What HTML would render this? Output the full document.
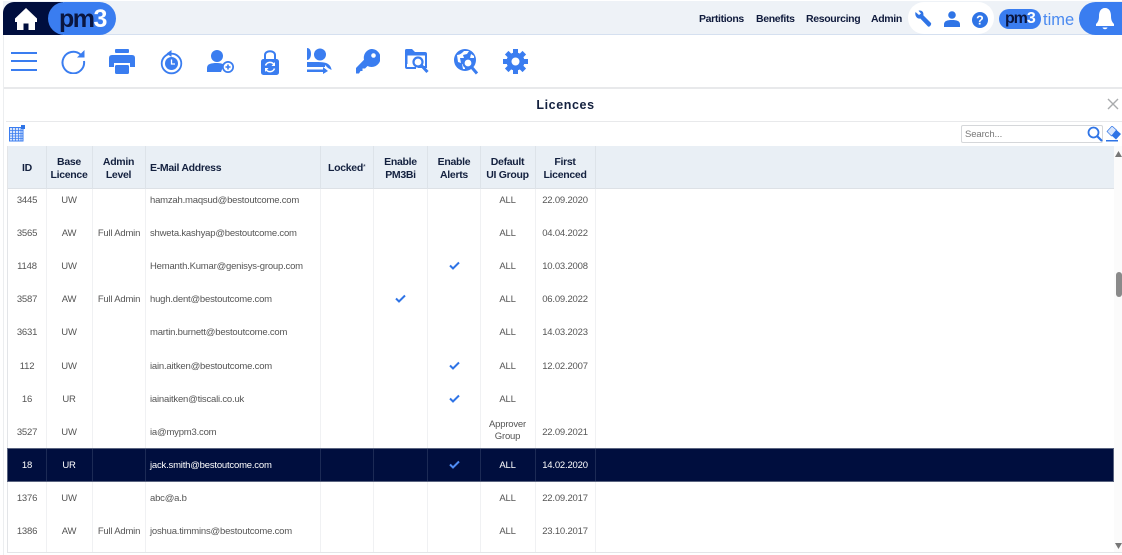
<!DOCTYPE html>
<html><head><meta charset="utf-8"><style>
*{box-sizing:border-box}
html,body{margin:0;padding:0;width:1122px;height:555px;overflow:hidden;background:#fff;font-family:"Liberation Sans",sans-serif}
.a{position:absolute}
.t{position:absolute;white-space:nowrap;line-height:12px}
.c{transform:translateX(-50%);text-align:center}
.nav{font-size:10.5px;font-weight:bold;color:#0f1a3c;top:12.5px;letter-spacing:-.35px}
.h{font-size:10.5px;font-weight:bold;color:#14213f;letter-spacing:-.3px;margin-top:1px}
.d{font-size:9.5px;color:#555;letter-spacing:-.2px;margin-top:2px}
.s{color:#fff}
.v{position:absolute;top:146px;width:1px;height:406px;background:#f0f1f3}
.hv{position:absolute;top:146px;width:1px;height:43px;background:#dde3e9}
.sv{position:absolute;top:449px;width:1px;height:32px;background:#1c2a55}
</style></head><body>
<div class="a" style="left:3px;top:1px;width:1119px;height:34px;background:#eef2f7;border-bottom:1px solid #d5e0f0"></div>
<div class="a" style="left:3px;top:2px;width:60px;height:33px;background:#000e3e;border-radius:11px 0 0 0"></div>
<div class="a" style="left:48px;top:2px;width:68px;height:33px;background:#3a7df0;border-radius:17px"></div>
<svg class="a" style="left:14px;top:7px" width="24" height="24" viewBox="0 0 24 24"><path d="M12 1 L23 11.5 V15 H21 V23 H14.5 V16.5 H9.5 V23 H3 V15 H1 V11.5Z" fill="#fff"/></svg>
<div class="t" style="left:59px;top:5px;font-size:25px;line-height:28px;font-weight:bold;letter-spacing:-1.5px;color:#0a1640">pm<span style="color:#fff">3</span></div>

<div class="t nav" style="left:699px">Partitions</div>
<div class="t nav" style="left:756px">Benefits</div>
<div class="t nav" style="left:806px">Resourcing</div>
<div class="t nav" style="left:871px">Admin</div>
<div class="a" style="left:908px;top:2px;width:86px;height:32px;background:#fff;border-radius:16px"></div>
<svg class="a" style="left:914px;top:10px" width="18" height="18" viewBox="0 0 18 18"><path d="M1.5 2 L5 5 L7 3.5 L4.5 .8 C7.5 -.2 10 2 9.3 5.2 L17 13 C17.8 14.5 15.5 17.5 14 16.5 L6.3 8.5 C3.2 9.3 .5 6 1.5 2Z" fill="#2f74e6"/></svg>
<svg class="a" style="left:944px;top:11px" width="16" height="16" viewBox="0 0 16 16"><circle cx="8" cy="4" r="3.8" fill="#2f74e6"/><path d="M0 16 V13.5 C0 10 3 9 8 9 S16 10 16 13.5 V16Z" fill="#2f74e6"/></svg>
<svg class="a" style="left:972px;top:12px" width="16" height="16" viewBox="0 0 16 16"><circle cx="8" cy="8" r="8" fill="#2f74e6"/><text x="8" y="12.5" font-family="Liberation Sans" font-size="12.5" font-weight="bold" fill="#fff" text-anchor="middle">?</text></svg>
<div class="a" style="left:999px;top:9px;width:42px;height:20px;background:#3a7df0;border-radius:10px"></div>
<div class="t" style="left:1005px;top:10px;font-size:16px;line-height:18px;font-weight:bold;letter-spacing:-1.1px;color:#0a1640">pm<span style="color:#fff">3</span></div>
<div class="t" style="left:1043px;top:10px;font-size:16.5px;line-height:20px;color:#4a8af0">time</div>
<div class="a" style="left:1079px;top:2px;width:60px;height:33px;background:#3a7df0;border-radius:17px"></div>
<svg class="a" style="left:1095px;top:7px" width="20" height="24" viewBox="0 0 20 24"><path d="M10 1 C14.5 1 16 5 16 9 C16 13 17 15 19 17 V19 H1 V17 C3 15 4 13 4 9 C4 5 5.5 1 10 1Z" fill="#fff"/><path d="M7.5 20.5 H12.5 C12 22.8 8 22.8 7.5 20.5Z" fill="#fff"/></svg>

<div class="a" style="left:11px;top:52px;width:26px;height:2px;background:#3a7df0"></div>
<div class="a" style="left:11px;top:60px;width:26px;height:2px;background:#3a7df0"></div>
<div class="a" style="left:11px;top:69px;width:26px;height:2px;background:#3a7df0"></div>
<svg class="a" style="left:60px;top:48px" width="26" height="26" viewBox="0 0 26 26"><path d="M20.5 6.5 A10.8 10.8 0 1 0 24 13" fill="none" stroke="#3a7df0" stroke-width="2"/><path d="M24.5 2 V9.5 H17Z" fill="#3a7df0"/></svg>
<svg class="a" style="left:109px;top:49px" width="26" height="25" viewBox="0 0 26 25"><rect x="6" y="0" width="14" height="4" rx="1" fill="#3a7df0"/><path d="M3 6 H23 Q26 6 26 9 V18 H21 V14 H5 V18 H0 V9 Q0 6 3 6Z" fill="#3a7df0"/><rect x="6" y="16" width="14" height="9" rx="1.5" fill="#3a7df0"/></svg>
<svg class="a" style="left:160px;top:49px" width="23" height="26" viewBox="0 0 23 26"><circle cx="11.5" cy="14.5" r="9.8" fill="none" stroke="#3a7df0" stroke-width="1.8"/><circle cx="11.5" cy="14.5" r="6.5" fill="#3a7df0"/><path d="M11.5 10.5 V15 H15" fill="none" stroke="#fff" stroke-width="1.3"/><path d="M11.5 1 V8 L6.5 4.5Z" fill="#3a7df0"/></svg>
<svg class="a" style="left:207px;top:50px" width="27" height="23" viewBox="0 0 27 23"><circle cx="10" cy="6" r="6" fill="#3a7df0"/><path d="M0 22 V18 C0 14 4 13 10 13 C13 13 15 13.5 17 14.5 L14 22Z" fill="#3a7df0"/><circle cx="21" cy="17" r="6" fill="#3a7df0"/><circle cx="21" cy="17" r="4.3" fill="#fff"/><path d="M21 14.5 V19.5 M18.5 17 H23.5" stroke="#3a7df0" stroke-width="1.6"/></svg>
<svg class="a" style="left:260px;top:49px" width="20" height="26" viewBox="0 0 20 26"><path d="M5 10 V6 C5 1 15 1 15 6 V10" fill="none" stroke="#3a7df0" stroke-width="2"/><rect x="1" y="10" width="18" height="16" rx="2.5" fill="#3a7df0"/><path d="M5.5 16.5 A4.8 4.8 0 0 1 14 15.5 M14.5 19.5 A4.8 4.8 0 0 1 6 20.5" fill="none" stroke="#fff" stroke-width="1.5"/><path d="M15 13 V17 H11.5Z M5 23 V19 H8.5Z" fill="#fff"/></svg>
<svg class="a" style="left:307px;top:48px" width="25" height="26" viewBox="0 0 25 26"><path d="M0 0 C3 0 4 3 4 6 S2.5 12 0 12Z" fill="#3a7df0"/><circle cx="13" cy="6.5" r="6" fill="#3a7df0"/><path d="M0 14 H8 C12 14 19 14 21 16 C24 18 24.5 21 24.5 22 L21 20 L18 17 V19 H0Z" fill="#3a7df0"/><path d="M0 21.5 H16 V19 L21 23 L16 26 V24 H0Z" fill="#3a7df0"/></svg>
<svg class="a" style="left:356px;top:49px" width="24" height="25" viewBox="0 0 24 25"><path d="M15 0 A9 9 0 1 1 11.5 17 L9 19.5 H6.5 V22 H4.5 L3 24.5 H0 V19 L8 10.8 A9 9 0 0 1 15 0Z" fill="#3a7df0"/><circle cx="17.5" cy="6.5" r="2.3" fill="#fff"/></svg>
<svg class="a" style="left:405px;top:49px" width="24" height="25" viewBox="0 0 24 25"><path d="M0 1.5 Q0 0 1.5 0 H7 L10 3 H20 Q22 3 22 5 V19 H13 L10 15 H2 V6 H0Z" fill="#3a7df0"/><rect x="2.5" y="6.5" width="17.5" height="10.5" fill="#fff"/><path d="M0 4 H2 V18 H11 V20 H2 Q0 20 0 18Z" fill="#3a7df0"/><circle cx="13" cy="13" r="4.5" fill="#fff" stroke="#3a7df0" stroke-width="2.2"/><path d="M16 16 L22.5 23" stroke="#3a7df0" stroke-width="3"/></svg>
<svg class="a" style="left:454px;top:49px" width="25" height="26" viewBox="0 0 25 26"><circle cx="11" cy="11" r="11" fill="#3a7df0"/><path d="M3 6 C6 6 8 4 10 2 L15 2 L13 5 L9 6 L10 9 L6 9 L7 14 L4 13Z M8 15 L11 15 L11 20 L9 20Z M17 5 L20 7 L20 9 L16 9Z" fill="#fff"/><circle cx="14" cy="14" r="4.5" fill="#fff" stroke="#3a7df0" stroke-width="2.2"/><path d="M17 17.5 L23 24.5" stroke="#3a7df0" stroke-width="3"/></svg>
<svg class="a" style="left:503px;top:49px" width="25" height="25" viewBox="0 0 25 25"><circle cx="12.5" cy="12.5" r="6.5" fill="none" stroke="#3a7df0" stroke-width="5"/><g stroke="#3a7df0" stroke-width="5"><path d="M12.5 0 V5 M12.5 20 V25 M0 12.5 H5 M20 12.5 H25 M3.7 3.7 L7.2 7.2 M17.8 17.8 L21.3 21.3 M3.7 21.3 L7.2 17.8 M17.8 7.2 L21.3 3.7"/></g></svg>

<div class="a" style="left:3px;top:87px;width:1119px;height:2px;background:#e8e9eb"></div>
<div class="a" style="left:3px;top:35px;width:1px;height:520px;background:#eceef0"></div>
<div class="t" style="left:565.5px;top:98px;font-size:12.5px;line-height:14px;font-weight:bold;color:#14213f;letter-spacing:.6px;transform:translateX(-50%)">Licences</div>
<svg class="a" style="left:1107px;top:98px" width="12" height="12" viewBox="0 0 12 12"><path d="M1 1 L11 11 M11 1 L1 11" stroke="#a9abad" stroke-width="1.4"/></svg>
<div class="a" style="left:6px;top:121px;width:1116px;height:1px;background:#e8e9eb"></div>
<svg class="a" style="left:9px;top:125px" width="16" height="17" viewBox="0 0 16 17"><rect x=".5" y="2.5" width="13.5" height="13.5" fill="#d9e6fb" stroke="#3a7df0"/><path d="M3.5 3 V16 M6.5 3 V16 M9.5 3 V16 M12 3 V16 M1 5.5 H14 M1 8.5 H14 M1 11 H14 M1 13.5 H14" stroke="#3a7df0" stroke-width=".8"/><rect x="12" y="0" width="4" height="4" fill="#2f74e6"/></svg>
<div class="a" style="left:961px;top:125px;width:142px;height:18px;border:1px solid #d5d7da;border-radius:2px;background:#fff"></div>
<div class="t" style="left:965px;top:129px;font-size:9.5px;letter-spacing:-.1px;color:#777">Search...</div>
<svg class="a" style="left:1087px;top:126px" width="16" height="16" viewBox="0 0 16 16"><circle cx="6.5" cy="6.5" r="5" fill="none" stroke="#2f74e6" stroke-width="1.8"/><path d="M10 10 L15 15" stroke="#2f74e6" stroke-width="2.2"/></svg>
<svg class="a" style="left:1106px;top:126px" width="15" height="16" viewBox="0 0 15 16"><path d="M6 0 L15 8 L10 13.500 L5 9Z" fill="#2f74e6"/><path d="M6 0 L1 5.500 L5.500 10 L10.500 4Z" fill="#d7e5fc" stroke="#2f74e6" stroke-width=".7"/><rect x="0" y="14" width="12" height="1.5" fill="#2f74e6"/></svg>

<div class="a" style="left:7px;top:146px;width:1107px;height:43px;background:#e9eff5;border-bottom:1px solid #dde1e6"></div>
<div class="a" style="left:7px;top:552px;width:1115px;height:1px;background:#e3e5e8"></div>
<div class="a" style="left:7px;top:146px;width:1px;height:406px;background:#e3e5e8"></div>
<div class="v" style="left:46px"></div><div class="v" style="left:92px"></div><div class="v" style="left:145px"></div><div class="v" style="left:320px"></div><div class="v" style="left:373px"></div><div class="v" style="left:427px"></div><div class="v" style="left:480px"></div><div class="v" style="left:535px"></div><div class="v" style="left:595px"></div>
<div class="hv" style="left:46px"></div><div class="hv" style="left:92px"></div><div class="hv" style="left:145px"></div><div class="hv" style="left:320px"></div><div class="hv" style="left:373px"></div><div class="hv" style="left:427px"></div><div class="hv" style="left:480px"></div><div class="hv" style="left:535px"></div><div class="hv" style="left:595px"></div>
<div class="a" style="left:7px;top:448px;width:1107px;height:34px;background:#000e3e;border:1px solid #5a6480"></div>
<div class="sv" style="left:46px"></div><div class="sv" style="left:92px"></div><div class="sv" style="left:145px"></div><div class="sv" style="left:320px"></div><div class="sv" style="left:373px"></div><div class="sv" style="left:427px"></div><div class="sv" style="left:480px"></div><div class="sv" style="left:535px"></div><div class="sv" style="left:595px"></div>

<div class="t h c" style="left:27px;top:161px">ID</div>
<div class="t h c" style="left:69px;top:155px;line-height:12.5px">Base<br>Licence</div>
<div class="t h c" style="left:118.5px;top:155px;line-height:12.5px">Admin<br>Level</div>
<div class="t h" style="left:150px;top:161px">E-Mail Address</div>
<div class="t h" style="left:328px;top:161px">Locked<span style="font-size:7px;font-weight:normal;vertical-align:2px">*</span></div>
<div class="t h c" style="left:400.5px;top:155px;line-height:12.5px">Enable<br>PM3Bi</div>
<div class="t h c" style="left:454px;top:155px;line-height:12.5px">Enable<br>Alerts</div>
<div class="t h c" style="left:507.5px;top:155px;line-height:12.5px">Default<br>UI Group</div>
<div class="t h c" style="left:565px;top:155px;line-height:12.5px">First<br>Licenced</div>

<div class="t d c" style="left:27px;top:193px">3445</div><div class="t d c" style="left:69px;top:193px">UW</div><div class="t d" style="left:150px;top:193px">hamzah.maqsud@bestoutcome.com</div><div class="t d c" style="left:507.5px;top:193px">ALL</div><div class="t d c" style="left:565px;top:193px">22.09.2020</div>
<div class="t d c" style="left:27px;top:226px">3565</div><div class="t d c" style="left:69px;top:226px">AW</div><div class="t d c" style="left:119px;top:226px">Full Admin</div><div class="t d" style="left:150px;top:226px">shweta.kashyap@bestoutcome.com</div><div class="t d c" style="left:507.5px;top:226px">ALL</div><div class="t d c" style="left:565px;top:226px">04.04.2022</div>
<div class="t d c" style="left:27px;top:259px">1148</div><div class="t d c" style="left:69px;top:259px">UW</div><div class="t d" style="left:150px;top:259px">Hemanth.Kumar@genisys-group.com</div><div class="t d c" style="left:507.5px;top:259px">ALL</div><div class="t d c" style="left:565px;top:259px">10.03.2008</div>
<div class="t d c" style="left:27px;top:292px">3587</div><div class="t d c" style="left:69px;top:292px">AW</div><div class="t d c" style="left:119px;top:292px">Full Admin</div><div class="t d" style="left:150px;top:292px">hugh.dent@bestoutcome.com</div><div class="t d c" style="left:507.5px;top:292px">ALL</div><div class="t d c" style="left:565px;top:292px">06.09.2022</div>
<div class="t d c" style="left:27px;top:325px">3631</div><div class="t d c" style="left:69px;top:325px">UW</div><div class="t d" style="left:150px;top:325px">martin.burnett@bestoutcome.com</div><div class="t d c" style="left:507.5px;top:325px">ALL</div><div class="t d c" style="left:565px;top:325px">14.03.2023</div>
<div class="t d c" style="left:27px;top:359px">112</div><div class="t d c" style="left:69px;top:359px">UW</div><div class="t d" style="left:150px;top:359px">iain.aitken@bestoutcome.com</div><div class="t d c" style="left:507.5px;top:359px">ALL</div><div class="t d c" style="left:565px;top:359px">12.02.2007</div>
<div class="t d c" style="left:27px;top:392px">16</div><div class="t d c" style="left:69px;top:392px">UR</div><div class="t d" style="left:150px;top:392px">iainaitken@tiscali.co.uk</div><div class="t d c" style="left:507.5px;top:392px">ALL</div>
<div class="t d c" style="left:27px;top:425px">3527</div><div class="t d c" style="left:69px;top:425px">UW</div><div class="t d" style="left:150px;top:425px">ia@mypm3.com</div><div class="t d c" style="left:507.5px;top:417px;line-height:11.5px">Approver<br>Group</div><div class="t d c" style="left:565px;top:425px">22.09.2021</div>
<div class="t d s c" style="left:27px;top:458px">18</div><div class="t d s c" style="left:69px;top:458px">UR</div><div class="t d s" style="left:150px;top:458px">jack.smith@bestoutcome.com</div><div class="t d s c" style="left:507.5px;top:458px">ALL</div><div class="t d s c" style="left:565px;top:458px">14.02.2020</div>
<div class="t d c" style="left:27px;top:491px">1376</div><div class="t d c" style="left:69px;top:491px">UW</div><div class="t d" style="left:150px;top:491px">abc@a.b</div><div class="t d c" style="left:507.5px;top:491px">ALL</div><div class="t d c" style="left:565px;top:491px">22.09.2017</div>
<div class="t d c" style="left:27px;top:524px">1386</div><div class="t d c" style="left:69px;top:524px">AW</div><div class="t d c" style="left:119px;top:524px">Full Admin</div><div class="t d" style="left:150px;top:524px">joshua.timmins@bestoutcome.com</div><div class="t d c" style="left:507.5px;top:524px">ALL</div><div class="t d c" style="left:565px;top:524px">23.10.2017</div>

<svg class="a" style="left:449px;top:261px" width="11" height="9" viewBox="0 0 11 9"><path d="M1 4.5 L4 7.5 L10 1.5" fill="none" stroke="#2f74e6" stroke-width="2"/></svg>
<svg class="a" style="left:395px;top:294px" width="11" height="9" viewBox="0 0 11 9"><path d="M1 4.5 L4 7.5 L10 1.5" fill="none" stroke="#2f74e6" stroke-width="2"/></svg>
<svg class="a" style="left:449px;top:361px" width="11" height="9" viewBox="0 0 11 9"><path d="M1 4.5 L4 7.5 L10 1.5" fill="none" stroke="#2f74e6" stroke-width="2"/></svg>
<svg class="a" style="left:449px;top:394px" width="11" height="9" viewBox="0 0 11 9"><path d="M1 4.5 L4 7.5 L10 1.5" fill="none" stroke="#2f74e6" stroke-width="2"/></svg>
<svg class="a" style="left:449px;top:460px" width="11" height="9" viewBox="0 0 11 9"><path d="M1 4.5 L4 7.5 L10 1.5" fill="none" stroke="#4f8df5" stroke-width="2"/></svg>

<div class="a" style="left:1114px;top:146px;width:8px;height:406px;background:#fbfbfb"></div>
<svg class="a" style="left:1115px;top:151px" width="7" height="6" viewBox="0 0 7 6"><path d="M3.5 0 L7 6 H0Z" fill="#777"/></svg>
<div class="a" style="left:1116px;top:272px;width:6px;height:25px;background:#8a8a8a;border-radius:3px"></div>
<svg class="a" style="left:1115px;top:543px" width="7" height="6" viewBox="0 0 7 6"><path d="M0 0 H7 L3.5 6Z" fill="#777"/></svg>
</body></html>
